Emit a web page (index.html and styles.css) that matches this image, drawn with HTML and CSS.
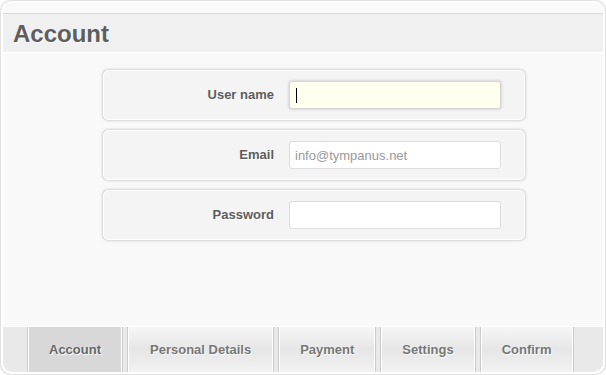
FILE: index.html
```
<!DOCTYPE html>
<html>
<head>
<meta charset="utf-8">
<link rel="stylesheet" href="styles.css">
</head>
<body>
<div class="wrapper">
  <div class="steps">
    <h1 class="legend">Account</h1>
    <div class="fields">
      <div class="row">
        <label class="label">User name</label>
        <span class="field">
          <input class="input focused" type="text">
          <span class="caret"></span>
        </span>
      </div>
      <div class="row">
        <label class="label">Email</label>
        <span class="field"><input class="input" type="text" placeholder="info@tympanus.net"></span>
      </div>
      <div class="row">
        <label class="label">Password</label>
        <span class="field"><input class="input" type="password"></span>
      </div>
    </div>
  </div>
  <nav class="nav">
    <ul class="tabs">
      <li class="tab selected"><a>Account</a></li>
      <li class="tab"><a>Personal Details</a></li>
      <li class="tab"><a>Payment</a></li>
      <li class="tab"><a>Settings</a></li>
      <li class="tab"><a>Confirm</a></li>
    </ul>
  </nav>
</div>
</body>
</html>
```
FILE: styles.css
```
html, body {
  margin: 0;
  padding: 0;
  background: #fff;
}
body {
  font-family: "Liberation Sans", Arial, sans-serif;
  font-size: 13px;
}
.wrapper {
  margin: 1px;
  width: 600px;
  border: 2px solid #fff;
  background: #f9f9f9;
  border-radius: 10px;
  box-shadow: 0 0 3px #aaa;
  overflow: hidden;
}
.steps {
  height: 323px;
  padding-top: 10px;
  box-sizing: border-box;
}
.legend {
  margin: 0 0 10px 0;
  padding: 6px 0 4px 10px;
  background: #f0f0f0;
  color: #5e5e5e;
  font-size: 24px;
  line-height: 28px;
  font-weight: bold;
  text-shadow: 1px 1px 1px #fff;
  border-top: 1px solid #d9d9d9;
  border-bottom: 1px solid #fff;
}
.fields {
  display: flex;
  flex-direction: column;
  gap: 10px;
  padding-top: 7px;
}
.row {
  margin-left: 100px;
  width: 400px;
  padding: 10px;
  background: #f4f4f4;
  border: 1px solid #fff;
  border-radius: 5px;
  box-shadow: 0 0 3px #aaa;
  display: flex;
  align-items: center;
}
.label {
  width: 160px;
  margin-right: 15px;
  text-align: right;
  line-height: 26px;
  color: #5c5c5c;
  font-weight: bold;
  text-shadow: 1px 1px 1px #fff;
}
.field {
  position: relative;
  display: block;
}
.input {
  display: block;
  box-sizing: content-box;
  width: 200px;
  height: 16px;
  padding: 5px;
  margin: 0;
  border: 1px solid #ddd;
  border-radius: 3px;
  background: #fff;
  font-family: "Liberation Sans", Arial, sans-serif;
  font-size: 13px;
  color: #555;
  outline: none;
}
.input::placeholder {
  color: #999;
}
.input.focused {
  background: #fffeef;
  border-color: #d6d6d6;
  box-shadow: 0 0 3px #bbb;
}
.caret {
  position: absolute;
  left: 7px;
  top: 7px;
  width: 1px;
  height: 15px;
  background: #000;
}
.nav {
  height: 45px;
  background: #e9e9e9;
  border-top: 1px solid #fff;
  border-radius: 0 0 10px 10px;
}
.tabs {
  list-style: none;
  margin: 0 0 0 22px;
  padding: 0;
  display: flex;
}
.tab {
  margin: 0 2px;
  border-left: 1px solid #ccc;
  border-right: 1px solid #ccc;
}
.tab a {
  display: block;
  height: 45px;
  line-height: 46px;
  padding: 0 20px;
  color: #777;
  font-weight: bold;
  text-shadow: 1px 1px 1px #fff;
  border-left: 1px solid #fff;
  border-right: 1px solid #fff;
  background: linear-gradient(to bottom, #f6f6f6 0%, #e6e6e6 50%, #f2f2f2 100%);
}
.tab:nth-child(2) a {
  padding: 0 21px;
}
.tab.selected a {
  background: #d8d8d8;
  color: #666;
}
```
